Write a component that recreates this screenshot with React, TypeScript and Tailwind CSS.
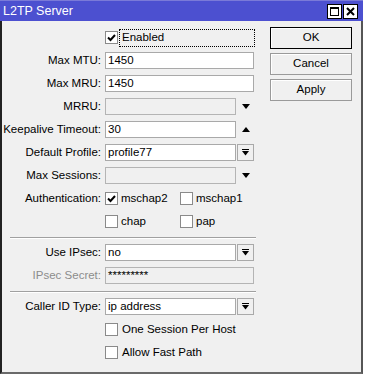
import React from "react";

const Check = () => (
  <svg width="9" height="8" viewBox="0 0 9 8" className="block">
    <path d="M1 3.5 L3.5 6 L8 1" stroke="#000" strokeWidth="2" fill="none" />
  </svg>
);

const CheckBox = ({ checked }: { checked?: boolean }) => (
  <div className="w-[13px] h-[13px] border border-[#8a8a8a] bg-white flex items-center justify-center shrink-0">
    {checked && <Check />}
  </div>
);

const DownTri = () => (
  <svg width="8" height="5" viewBox="0 0 8 5" className="block">
    <path d="M0 0 H8 L4 5 Z" fill="#000" />
  </svg>
);
const UpTri = () => (
  <svg width="8" height="5" viewBox="0 0 8 5" className="block">
    <path d="M0 5 H8 L4 0 Z" fill="#000" />
  </svg>
);

const DropBtn = () => (
  <div className="w-[17px] h-[17px] border border-[#a9a9a9] bg-[#f0f0f0] flex flex-col items-center justify-center ml-[1px] shrink-0">
    <div className="w-[7px] h-[1px] bg-black mb-[1px]" />
    <svg width="7" height="5" viewBox="0 0 7 5" className="block">
      <path d="M0 0 H7 L3.5 4.5 Z" fill="#000" />
    </svg>
  </div>
);

const Label = ({ children, dim }: { children?: React.ReactNode; dim?: boolean }) => (
  <div className={`w-[100px] text-right pr-[1px] shrink-0 whitespace-nowrap ${dim ? "text-[#8c8c8c]" : "text-black"}`}>{children}</div>
);

const Row = ({ children }: { children: React.ReactNode }) => (
  <div className="h-[23px] flex items-center">{children}</div>
);

const Input = ({ value, w, disabled }: { value?: string; w: string; disabled?: boolean }) => (
  <div
    className={`${w} h-[17px] border flex items-center px-[2px] shrink-0 ${
      disabled ? "bg-[#f0f0f0] border-[#b4b4b4]" : "bg-white border-[#a9a9a9]"
    }`}
  >
    <span className="leading-none">{value}</span>
  </div>
);

const Sep = () => (
  <div className="h-[8px] flex flex-col pt-[4px] pl-[8px]">
    <div className="w-[246px] h-[1px] bg-[#a0a0a0]" />
    <div className="w-[246px] h-[1px] bg-white" />
  </div>
);

const Btn = ({ children, def }: { children: React.ReactNode; def?: boolean }) => (
  <div
    className={`w-[82px] h-[22px] flex items-center justify-center bg-[#f0f0f0] border ${
      def ? "border-black" : "border-[#9a9a9a]"
    } shadow-[inset_1px_1px_0_#ffffff]`}
  >
    {children}
  </div>
);

export default function App() {
  return (
    <div className="w-[365px] h-[375px] bg-white font-['Liberation_Sans',Arial,sans-serif] text-[11.5px] text-black">
      <div className="w-[363px] h-[374px] flex flex-col">
        <div className="h-[21px] bg-[#4c50d0] flex items-center pl-[3px] pr-[5px] border-t border-[#7a7ad8]">
          <span className="text-white text-[12.5px]">L2TP Server</span>
          <div className="ml-auto flex gap-[1px]">
            <div className="w-[15px] h-[15px] bg-white border border-black flex items-center justify-center">
              <div className="w-[9px] h-[9px] border border-black border-t-2" />
            </div>
            <div className="w-[15px] h-[15px] bg-white border border-black flex items-center justify-center">
              <svg width="9" height="9" viewBox="0 0 9 9">
                <path d="M1 1 L8 8 M8 1 L1 8" stroke="#000" strokeWidth="2" />
              </svg>
            </div>
          </div>
        </div>
        <div className="flex-1 bg-[#f0f0f0] border-l-2 border-r-2 border-b-2 border-l-[#222] border-r-[#555] border-b-[#6a6a6a] flex">
          <div className="w-[260px] pt-[5px] flex flex-col">
            <Row>
              <Label />
              <div className="ml-[3px] flex items-center">
                <CheckBox checked />
                <div className="ml-[1px] w-[136px] h-[18px] border border-dotted border-black flex items-center pl-[2px]">
                  Enabled
                </div>
              </div>
            </Row>
            <Row>
              <Label>Max MTU:</Label>
              <div className="ml-[3px]"><Input value="1450" w="w-[149px]" /></div>
            </Row>
            <Row>
              <Label>Max MRU:</Label>
              <div className="ml-[3px]"><Input value="1450" w="w-[149px]" /></div>
            </Row>
            <Row>
              <Label>MRRU:</Label>
              <div className="ml-[3px] flex items-center">
                <Input w="w-[131px]" disabled />
                <div className="w-[18px] flex justify-center ml-[1px]"><DownTri /></div>
              </div>
            </Row>
            <Row>
              <Label>Keepalive Timeout:</Label>
              <div className="ml-[3px] flex items-center">
                <Input value="30" w="w-[131px]" />
                <div className="w-[18px] flex justify-center ml-[1px]"><UpTri /></div>
              </div>
            </Row>
            <Row>
              <Label>Default Profile:</Label>
              <div className="ml-[3px] flex items-center">
                <Input value="profile77" w="w-[131px]" />
                <DropBtn />
              </div>
            </Row>
            <Row>
              <Label>Max Sessions:</Label>
              <div className="ml-[3px] flex items-center">
                <Input w="w-[131px]" disabled />
                <div className="w-[18px] flex justify-center ml-[1px]"><DownTri /></div>
              </div>
            </Row>
            <Row>
              <Label>Authentication:</Label>
              <div className="ml-[3px] flex items-center">
                <CheckBox checked />
                <span className="ml-[3px] w-[59px]">mschap2</span>
                <CheckBox />
                <span className="ml-[3px]">mschap1</span>
              </div>
            </Row>
            <Row>
              <Label />
              <div className="ml-[3px] flex items-center">
                <CheckBox />
                <span className="ml-[3px] w-[59px]">chap</span>
                <CheckBox />
                <span className="ml-[3px]">pap</span>
              </div>
            </Row>
            <Sep />
            <Row>
              <Label>Use IPsec:</Label>
              <div className="ml-[3px] flex items-center">
                <Input value="no" w="w-[131px]" />
                <DropBtn />
              </div>
            </Row>
            <Row>
              <Label dim>IPsec Secret:</Label>
              <div className="ml-[3px]">
                <Input value="*********" w="w-[149px]" disabled />
              </div>
            </Row>
            <Sep />
            <Row>
              <Label>Caller ID Type:</Label>
              <div className="ml-[3px] flex items-center">
                <Input value="ip address" w="w-[131px]" />
                <DropBtn />
              </div>
            </Row>
            <Row>
              <Label />
              <div className="ml-[3px] flex items-center">
                <CheckBox />
                <span className="ml-[4px]">One Session Per Host</span>
              </div>
            </Row>
            <Row>
              <Label />
              <div className="ml-[3px] flex items-center">
                <CheckBox />
                <span className="ml-[4px]">Allow Fast Path</span>
              </div>
            </Row>
          </div>
          <div className="ml-[8px] pt-[6px] flex flex-col gap-[4px]">
            <Btn def>OK</Btn>
            <Btn>Cancel</Btn>
            <Btn>Apply</Btn>
          </div>
        </div>
      </div>
    </div>
  );
}
